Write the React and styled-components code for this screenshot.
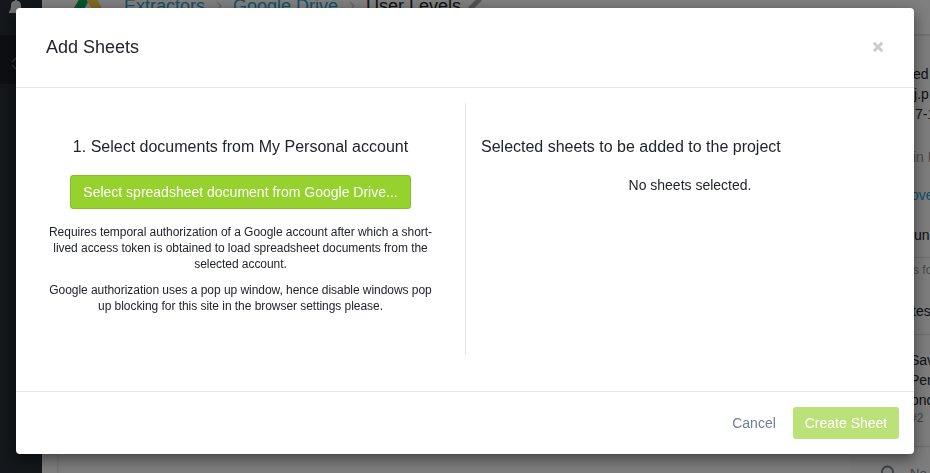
import React from "react";
import styled, { createGlobalStyle } from "styled-components";

const GlobalStyle = createGlobalStyle`
  * { box-sizing: border-box; }
  body {
    margin: 0;
    overflow: hidden;
    font-family: "Liberation Sans", Arial, sans-serif;
    font-size: 14px;
    line-height: 20px;
    color: #22252b;
  }
  h1, h2, h3, p { margin: 0; font-weight: 400; }
`;

const Page = styled.div`
  display: flex;
  height: 473px;
  overflow: hidden;
  background: #fff;
`;

const Rail = styled.aside`
  flex: none;
  width: 42px;
  background: #282f36;
`;

const RailTop = styled.div`
  height: 35px;
  padding: 0 0 0 9px;
`;

const RailRow = styled.div`
  height: 50px;
  padding: 20px 0 0 10px;
  background: #1c1e23;
  border-bottom: 1px solid #2b323a;
`;

const Main = styled.div`
  flex: 1;
  min-width: 0;
  background: #fff;
`;

const TopBar = styled.header`
  display: flex;
  height: 36px;
  border-bottom: 2px solid #e6e6e6;
  font-size: 18px;
  line-height: 20px;
  background: #fff;
`;

const Logo = styled.svg`
  flex: none;
  margin: -7px 0 0 30px;
`;

const Crumbs = styled.nav`
  display: flex;
  margin: -4px 0 0 20px;
  white-space: nowrap;
`;

const Crumb = styled.span`
  width: ${(p) => p.$width}px;
  color: ${(p) => (p.$link ? "#279fd6" : "#22252b")};
`;

const Chevron = styled.svg`
  flex: none;
  margin: 5px 11px 0 11px;
`;

const Pencil = styled.svg`
  flex: none;
  margin: 0 0 0 7px;
`;

const Content = styled.div`
  display: flex;
  height: 437px;
`;

const Gutter = styled.div`
  width: 17px;
  border-right: 2px solid #f0f0f0;
`;

const Canvas = styled.div`
  flex: 1;
`;

const SidePanel = styled.aside`
  width: 79px;
  padding-top: 28px;
  background: #fafafa;
  overflow: hidden;
  white-space: nowrap;
`;

const PanelLine = styled.div`
  height: 20px;
  margin-top: ${(p) => p.$gap || 0}px;
  padding-left: ${(p) => p.$indent}px;
  color: ${(p) => p.$color || "#22252b"};
  font-size: ${(p) => p.$size || 14}px;
`;

const PanelRule = styled.div`
  height: 1px;
  margin-top: ${(p) => p.$gap}px;
  background: #dedede;
`;

const PanelFooter = styled.div`
  display: flex;
  gap: 15px;
  margin-top: 17px;
  padding-left: 29px;
  color: #7b818a;
  font-size: 13px;

  svg { flex: none; }
`;

const Backdrop = styled.div`
  position: fixed;
  inset: 0;
  padding: 8px 16px;
  background: rgba(0, 0, 0, 0.5);
`;

const Modal = styled.section`
  display: flex;
  flex-direction: column;
  height: 446px;
  background: #fff;
  border-radius: 4px;
  box-shadow: 0 5px 15px rgba(0, 0, 0, 0.5);
`;

const ModalHeader = styled.header`
  display: flex;
  flex: none;
  align-items: center;
  justify-content: space-between;
  height: 80px;
  padding: 0 30px 2px;
  border-bottom: 1px solid #e5e5e5;
`;

const Title = styled.h1`
  font-size: 18px;
  line-height: 24px;
`;

const CloseButton = styled.button`
  display: flex;
  padding: 0;
  border: 0;
  background: none;
`;

const ModalBody = styled.div`
  display: grid;
  grid-template-columns: 435px 1fr;
  height: 303px;
  padding: 15px;
`;

const Picker = styled.div`
  height: 251px;
  padding: 33px 30px 0 15px;
  border-right: 1px solid #e5e5e5;
  text-align: center;
  white-space: nowrap;
`;

const Selection = styled.div`
  padding: 33px 0 0 15px;
`;

const SectionTitle = styled.h2`
  font-size: 16px;
  line-height: 22px;
  white-space: nowrap;
`;

const DriveButton = styled.button`
  display: block;
  width: 341px;
  height: 34px;
  margin: 17px auto 15px;
  padding: 0;
  border: 1px solid #86bd28;
  border-radius: 3px;
  background: #96d22d;
  color: #fff;
  font: 14px/20px "Liberation Sans", Arial, sans-serif;
`;

const Help = styled.p`
  margin-bottom: 10px;
  font-size: 12px;
  line-height: 16px;
  letter-spacing: -0.045px;
`;

const Empty = styled.p`
  margin-top: 17px;
  text-align: center;
`;

const ModalFooter = styled.footer`
  display: flex;
  align-items: center;
  justify-content: flex-end;
  height: 63px;
  padding-right: 15px;
  border-top: 1px solid #e5e5e5;
`;

const FooterButton = styled.button`
  height: 32px;
  padding: 0;
  border: 0;
  border-radius: 3px;
  font: 14px/20px "Liberation Sans", Arial, sans-serif;
  width: ${(p) => (p.$primary ? 106 : 78)}px;
  color: ${(p) => (p.$primary ? "#fff" : "#6f7f95")};
  background: ${(p) => (p.$primary ? "#bbe279" : "transparent")};
`;

const CrumbArrow = () => (
  <Chevron width="6" height="10" viewBox="0 0 6 10" fill="none" stroke="#c8c8c8" strokeWidth="1.2">
    <path d="M1 1l4 4-4 4" />
  </Chevron>
);

export default function App() {
  return (
    <>
      <GlobalStyle />
      <Page>
        <Rail>
          <RailTop>
            <svg width="14" height="15" viewBox="0 0 14 15" fill="#e0e3e7">
              <path d="M6 0h2v1c3 0 4 2 4 5 0 3 1 5 2 6v1H0v-1c1-1 2-3 2-6 0-3 1-5 4-5z" />
            </svg>
          </RailTop>
          <RailRow>
            <svg width="14" height="16" viewBox="0 0 14 16" fill="none" stroke="#70777f" strokeWidth="1.3">
              <path d="M6 3L2 7M2 10l4 4" />
            </svg>
          </RailRow>
        </Rail>
        <Main>
          <TopBar>
            <Logo width="32" height="28" viewBox="0 0 32 28">
              <path d="M10.7 0L0 18.5 5.3 28 16 9.3z" fill="#0da960" />
              <path d="M10.7 0h10.6L32 18.6H21.4z" fill="#ffcf48" />
              <path d="M5.3 28l5.3-9.4H32L26.7 28z" fill="#2d6fdd" />
            </Logo>
            <Crumbs>
              <Crumb $link $width={81}>Extractors</Crumb>
              <CrumbArrow />
              <Crumb $link $width={105}>Google Drive</Crumb>
              <CrumbArrow />
              <Crumb $width={94}>User Levels</Crumb>
              <Pencil width="16" height="18" viewBox="0 0 16 18" stroke="#a2a5aa" strokeWidth="5">
                <path d="M13 3L3 13" />
              </Pencil>
            </Crumbs>
          </TopBar>
          <Content>
            <Gutter />
            <Canvas />
            <SidePanel>
              <PanelLine $indent={62}>ed</PanelLine>
              <PanelLine $indent={63}>j.p</PanelLine>
              <PanelLine $indent={64}>7-1</PanelLine>
              <PanelLine $gap={23} $indent={62} $color="#a294a0">in P</PanelLine>
              <PanelLine $gap={18} $indent={60} $color="#279fd6">over</PanelLine>
              <PanelLine $gap={20} $indent={63}>un</PanelLine>
              <PanelRule $gap={12} />
              <PanelLine $gap={2} $indent={62} $size={12} $color="#9398a2">s fo</PanelLine>
              <PanelLine $gap={21} $indent={61}>test</PanelLine>
              <PanelRule $gap={13} />
              <PanelLine $gap={15} $indent={59}>Sav</PanelLine>
              <PanelLine $indent={59}>Per</PanelLine>
              <PanelLine $indent={60}>ond</PanelLine>
              <PanelLine $gap={-2} $indent={59} $size={12} $color="#858b94">#2</PanelLine>
              <PanelRule $gap={18} />
              <PanelFooter>
                <svg width="15" height="15" viewBox="0 0 15 15" fill="none" stroke="#7b818a" strokeWidth="1.8">
                  <circle cx="7.5" cy="8" r="5.5" />
                </svg>
                <span>No c</span>
              </PanelFooter>
            </SidePanel>
          </Content>
        </Main>
      </Page>
      <Backdrop>
        <Modal role="dialog">
          <ModalHeader>
            <Title>Add Sheets</Title>
            <CloseButton aria-label="Close">
              <svg width="12" height="12" viewBox="0 0 12 12" stroke="#ccc" strokeWidth="3">
                <path d="M1.8 1.8l8.4 8.4M10.2 1.8l-8.4 8.4" />
              </svg>
            </CloseButton>
          </ModalHeader>
          <ModalBody>
            <Picker>
              <SectionTitle>1. Select documents from My Personal account</SectionTitle>
              <DriveButton>Select spreadsheet document from Google Drive...</DriveButton>
              <Help>
                Requires temporal authorization of a Google account after which a short-
                <br />
                lived access token is obtained to load spreadsheet documents from the
                <br />
                selected account.
              </Help>
              <Help>
                Google authorization uses a pop up window, hence disable windows pop
                <br />
                up blocking for this site in the browser settings please.
              </Help>
            </Picker>
            <Selection>
              <SectionTitle>Selected sheets to be added to the project</SectionTitle>
              <Empty>No sheets selected.</Empty>
            </Selection>
          </ModalBody>
          <ModalFooter>
            <FooterButton>Cancel</FooterButton>
            <FooterButton $primary>Create Sheet</FooterButton>
          </ModalFooter>
        </Modal>
      </Backdrop>
    </>
  );
}
